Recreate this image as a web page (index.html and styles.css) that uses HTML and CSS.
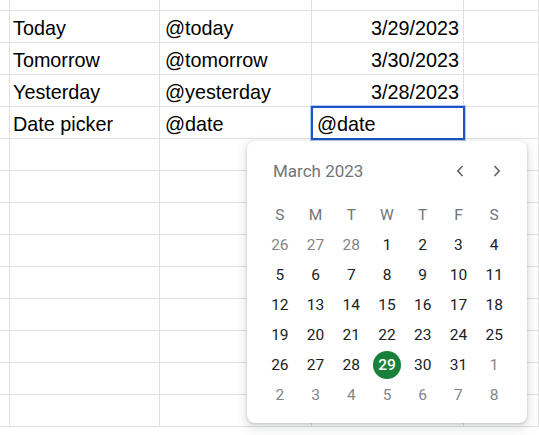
FILE: index.html
```html
<!DOCTYPE html>
<html>
<head>
<meta charset="utf-8">
<link rel="stylesheet" href="styles.css">
</head>
<body>
<div class="sheet">
  <div class="c"></div><div class="c"></div><div class="c"></div><div class="c"></div><div class="c"></div>

  <div class="c"></div><div class="c">Today</div><div class="c">@today</div><div class="c num">3/29/2023</div><div class="c"></div>
  <div class="c"></div><div class="c">Tomorrow</div><div class="c">@tomorrow</div><div class="c num">3/30/2023</div><div class="c"></div>
  <div class="c"></div><div class="c">Yesterday</div><div class="c">@yesterday</div><div class="c num">3/28/2023</div><div class="c"></div>
  <div class="c"></div><div class="c">Date picker</div><div class="c">@date</div><div class="c selected">@date</div><div class="c"></div>

  <div class="c"></div><div class="c"></div><div class="c"></div><div class="c"></div><div class="c"></div>
  <div class="c"></div><div class="c"></div><div class="c"></div><div class="c"></div><div class="c"></div>
  <div class="c"></div><div class="c"></div><div class="c"></div><div class="c"></div><div class="c"></div>
  <div class="c"></div><div class="c"></div><div class="c"></div><div class="c"></div><div class="c"></div>
  <div class="c"></div><div class="c"></div><div class="c"></div><div class="c"></div><div class="c"></div>
  <div class="c"></div><div class="c"></div><div class="c"></div><div class="c"></div><div class="c"></div>
  <div class="c"></div><div class="c"></div><div class="c"></div><div class="c"></div><div class="c"></div>
  <div class="c"></div><div class="c"></div><div class="c"></div><div class="c"></div><div class="c"></div>
  <div class="c"></div><div class="c"></div><div class="c"></div><div class="c"></div><div class="c"></div>
</div>

<div class="picker">
  <div class="picker-head">
    <span class="month">March 2023</span>
    <div class="nav">
      <span class="nav-btn"><svg width="8" height="12" viewBox="0 0 8 12"><path d="M6.5 1 L1.8 6 L6.5 11" fill="none" stroke="#5f6368" stroke-width="1.6"/></svg></span>
      <span class="nav-btn"><svg width="8" height="12" viewBox="0 0 8 12"><path d="M1.5 1 L6.2 6 L1.5 11" fill="none" stroke="#5f6368" stroke-width="1.6"/></svg></span>
    </div>
  </div>
  <div class="days">
    <span class="dow">S</span><span class="dow">M</span><span class="dow">T</span><span class="dow">W</span><span class="dow">T</span><span class="dow">F</span><span class="dow">S</span>
    <span class="d out">26</span><span class="d out">27</span><span class="d out">28</span><span class="d">1</span><span class="d">2</span><span class="d">3</span><span class="d">4</span>
    <span class="d">5</span><span class="d">6</span><span class="d">7</span><span class="d">8</span><span class="d">9</span><span class="d">10</span><span class="d">11</span>
    <span class="d">12</span><span class="d">13</span><span class="d">14</span><span class="d">15</span><span class="d">16</span><span class="d">17</span><span class="d">18</span>
    <span class="d">19</span><span class="d">20</span><span class="d">21</span><span class="d">22</span><span class="d">23</span><span class="d">24</span><span class="d">25</span>
    <span class="d">26</span><span class="d">27</span><span class="d">28</span><span class="d"><span class="today">29</span></span><span class="d">30</span><span class="d">31</span><span class="d out">1</span>
    <span class="d out">2</span><span class="d out">3</span><span class="d out">4</span><span class="d out">5</span><span class="d out">6</span><span class="d out">7</span><span class="d out">8</span>
  </div>
</div>
</body>
</html>
```

FILE: styles.css
```css
* { box-sizing: border-box; }

html, body {
  margin: 0;
  padding: 0;
  background: #ffffff;
  overflow: hidden;
}

body {
  position: relative;
  width: 539px;
  height: 435px;
}

.sheet {
  display: grid;
  grid-template-columns: 8px 152px 152px 152px 1fr;
  grid-template-rows: 11px repeat(13, 32px);
  font-family: "Liberation Sans", Arial, sans-serif;
  font-size: 19.8px;
  color: #000000;
}

.c {
  border-right: 1px solid #e0e0e0;
  border-bottom: 1px solid #e0e0e0;
  display: flex;
  align-items: flex-end;
  padding: 0 4px 2px 5px;
  line-height: 1.1;
  white-space: nowrap;
  overflow: hidden;
}

.num {
  justify-content: flex-end;
}

.selected {
  position: relative;
  z-index: 1;
  overflow: visible;
  outline: 2px solid #1c56c4;
  outline-offset: -1px;
  box-shadow: 0 0 0 2px #b3cbf3;
}

.picker {
  position: absolute;
  left: 247px;
  top: 141px;
  width: 280px;
  height: 282px;
  background: #ffffff;
  border-radius: 8px;
  box-shadow: 0 1px 3px rgba(60, 64, 67, 0.25), 0 4px 10px 3px rgba(60, 64, 67, 0.12);
  z-index: 2;
  font-family: Roboto, "Noto Sans", sans-serif;
}

.picker-head {
  height: 59px;
  display: flex;
  align-items: center;
  justify-content: space-between;
  padding: 0 14px 0 26px;
}

.month {
  font-size: 17px;
  color: #70757a;
}

.nav {
  display: flex;
  gap: 5px;
}

.nav-btn {
  width: 32px;
  height: 32px;
  display: flex;
  align-items: center;
  justify-content: center;
}

.days {
  display: grid;
  grid-template-columns: repeat(7, 1fr);
  grid-auto-rows: 30px;
  padding: 0 15px 13px;
  font-size: 15.5px;
}

.dow, .d {
  display: flex;
  align-items: center;
  justify-content: center;
}

.dow {
  color: #70757a;
}

.d {
  color: #202124;
}

.d.out {
  color: #80868b;
}

.today {
  width: 28px;
  height: 28px;
  border-radius: 50%;
  background: #188038;
  color: #ffffff;
  font-weight: 500;
  display: flex;
  align-items: center;
  justify-content: center;
}
```
